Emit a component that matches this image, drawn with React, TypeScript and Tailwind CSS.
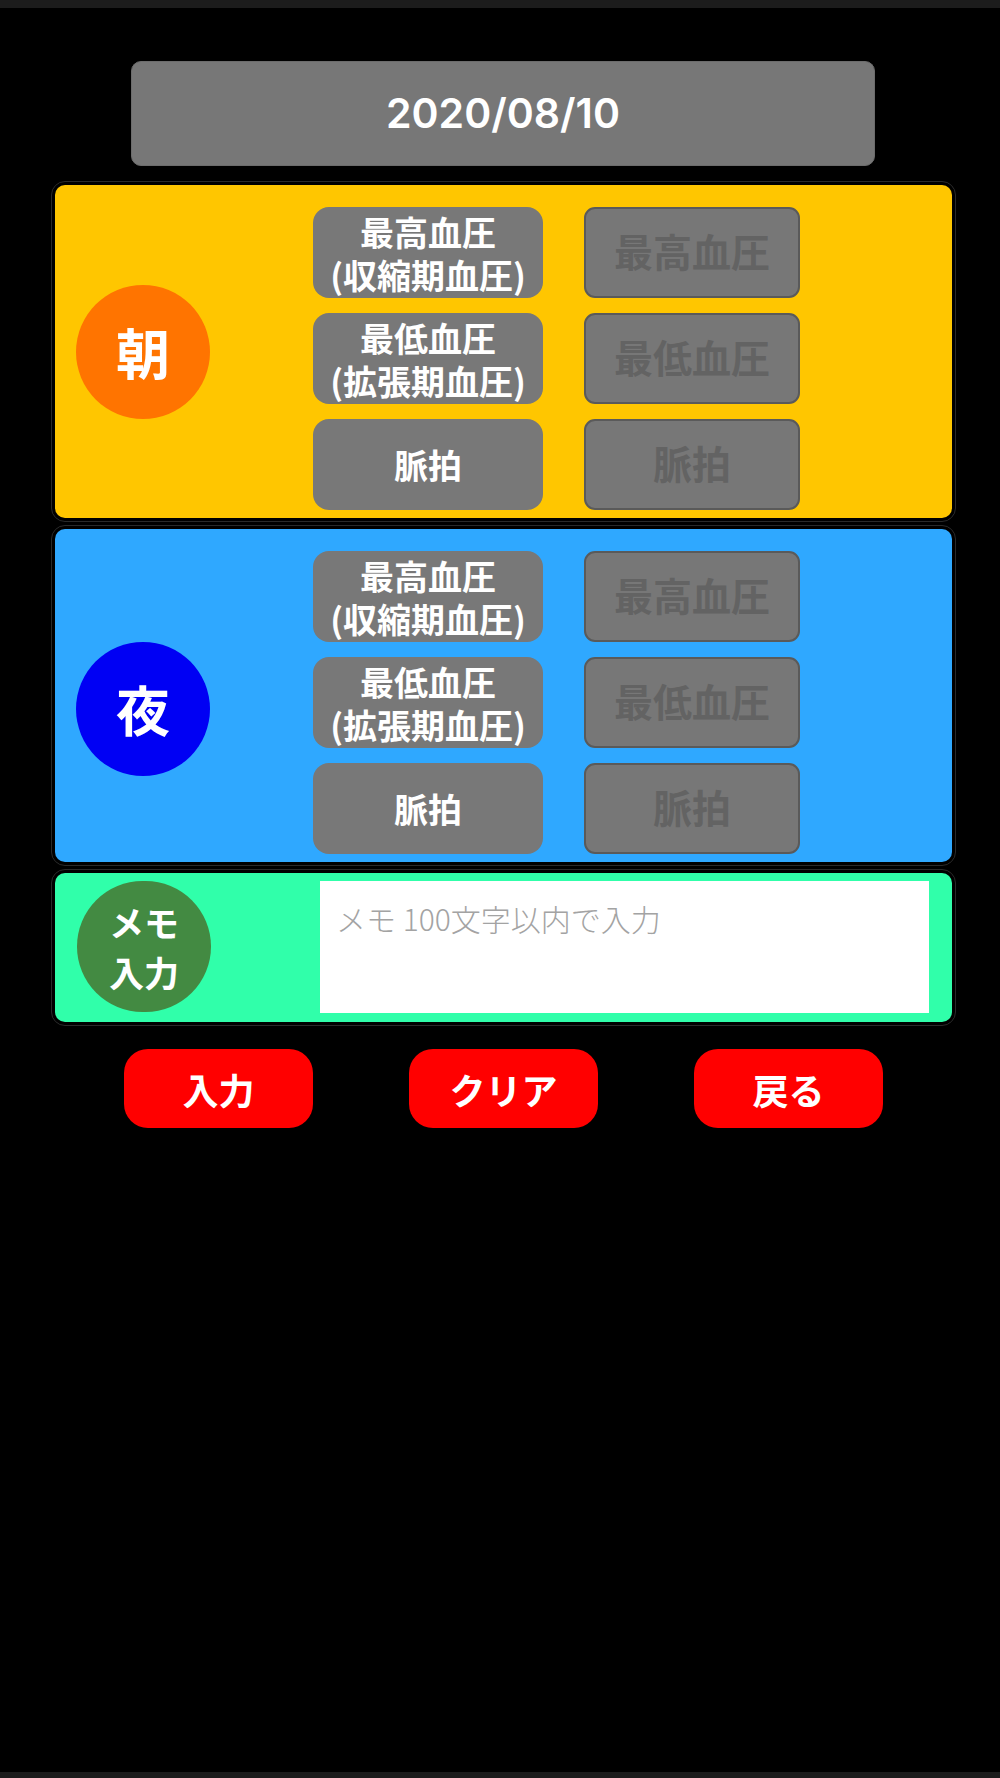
import React from "react";

const jp = { fontFamily: '"Noto Sans CJK JP", "Noto Sans", sans-serif' };

function LeftBtn({ text }: { text: string }) {
  return (
    <div className="w-[230px] h-[91px] rounded-[16px] bg-[#787878] flex items-center justify-center text-white font-bold text-[34px] leading-[43px] text-center whitespace-pre-line">
      {text}
    </div>
  );
}

function RightBtn({ label }: { label: string }) {
  return (
    <div className="w-[216px] h-[91px] rounded-[11px] bg-[#777777] border-2 border-[#5a5a5a] flex items-center justify-center text-[#636363] font-bold text-[39px] leading-none pb-[4px]">
      {label}
    </div>
  );
}

function Panel({
  bg,
  circleBg,
  label,
  circleOffset,
}: {
  bg: string;
  circleBg: string;
  label: string;
  circleOffset: string;
}) {
  return (
    <div
      className={`ml-[55px] w-[897px] h-[333px] rounded-[10px] outline outline-1 outline-[#2a2a2a] outline-offset-[3px] flex items-start ${bg}`}
    >
      <div className={`self-center w-[258px] pl-[21px] ${circleOffset}`}>
        <div
          className={`w-[134px] h-[134px] rounded-full flex items-center justify-center text-white font-bold text-[54px] leading-none ${circleBg}`}
        >
          {label}
        </div>
      </div>
      <div className="mt-[22px] flex flex-col gap-[15px]">
        <LeftBtn text={"最高血圧\n(収縮期血圧)"} />
        <LeftBtn text={"最低血圧\n(拡張期血圧)"} />
        <LeftBtn text="脈拍" />
      </div>
      <div className="mt-[22px] ml-[41px] flex flex-col gap-[15px]">
        <RightBtn label="最高血圧" />
        <RightBtn label="最低血圧" />
        <RightBtn label="脈拍" />
      </div>
    </div>
  );
}

function RedBtn({ label }: { label: string }) {
  return (
    <div className="w-[189px] h-[79px] rounded-[24px] bg-[#ff0000] flex items-center justify-center text-white font-bold text-[36px] leading-none">
      {label}
    </div>
  );
}

export default function App() {
  return (
    <div className="w-[1000px] h-[1778px] bg-black flex flex-col" style={jp}>
      <div className="h-[8px] bg-[#1c1c1c]" />
      <div className="ml-[131px] mt-[53px] w-[744px] h-[105px] rounded-[10px] bg-[#777777] border border-[#6c6c6c] flex items-center justify-center">
        <span
          className="text-white text-[41px] font-semibold"
          style={{ fontFamily: 'Inter, "Liberation Sans", sans-serif' }}
        >
          2020/08/10
        </span>
      </div>
      <div className="mt-[19px]">
        <Panel bg="bg-[#ffc600]" circleBg="bg-[#ff7400]" label="朝" circleOffset="" />
      </div>
      <div className="mt-[11px]">
        <Panel bg="bg-[#2fa8ff]" circleBg="bg-[#0000f4]" label="夜" circleOffset="mt-[27px]" />
      </div>
      <div className="mt-[11px] ml-[55px] w-[897px] h-[149px] rounded-[10px] outline outline-1 outline-[#2a2a2a] outline-offset-[3px] bg-[#30ffaa] flex items-start pt-[8px]">
        <div className="ml-[22px] w-[134px] h-[131px] rounded-full bg-[#438a42] flex items-center justify-center text-white font-bold text-[35px] leading-[50px] text-center whitespace-pre-line">
          {"メモ\n入力"}
        </div>
        <textarea
          className="ml-[109px] w-[609px] h-[132px] bg-white resize-none outline-none pl-[16px] pt-[19px] text-[30px] leading-[36px] font-light text-[#333] placeholder:text-[#a3a3a3]"
          placeholder="メモ 100文字以内で入力"
          style={jp}
        />
      </div>
      <div className="mt-[27px] ml-[124px] flex gap-[96px]">
        <RedBtn label="入力" />
        <RedBtn label="クリア" />
        <RedBtn label="戻る" />
      </div>
      <div className="flex-1" />
      <div className="h-[6px] bg-[#1c1c1c]" />
    </div>
  );
}
